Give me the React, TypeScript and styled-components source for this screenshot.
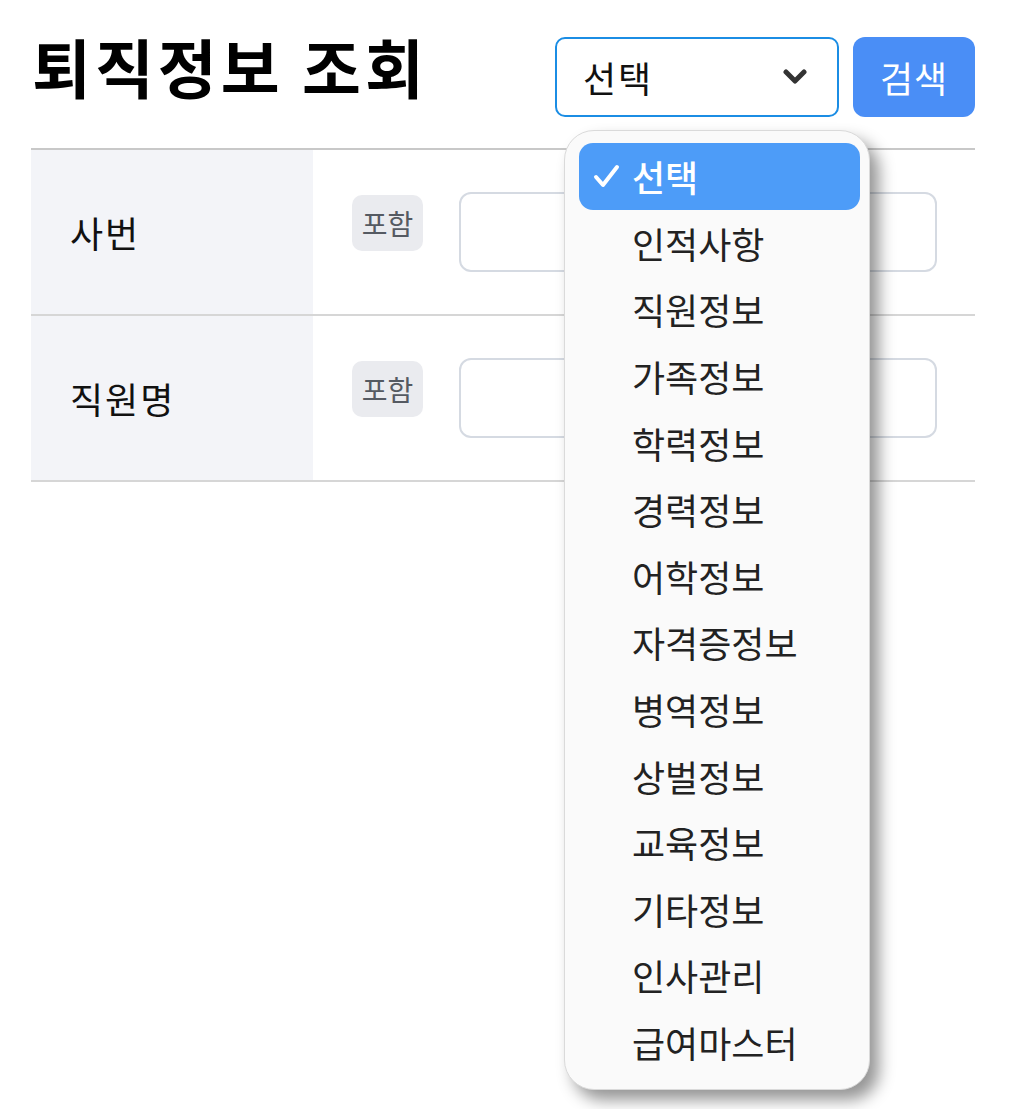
import React from "react";
import styled, { createGlobalStyle } from "styled-components";

const Global = createGlobalStyle`
  html, body { margin: 0; padding: 0; background: #ffffff; }
  body { font-family: "Noto Sans CJK KR", "Noto Sans", sans-serif; color: #111; }
  * { box-sizing: border-box; }
`;

const Page = styled.div`
  width: 1026px;
  height: 1109px;
  padding: 37px 51px 0 31px;
  overflow: hidden;
`;

const Header = styled.div`
  display: flex;
  justify-content: space-between;
  align-items: flex-start;
  height: 80px;
`;

const Title = styled.h1`
  margin: -4px 0 0 1px;
  font-size: 64px;
  line-height: 64px;
  font-weight: 700;
  letter-spacing: 4px;
  color: #000;
`;

const Controls = styled.div`
  display: flex;
  gap: 14px;
  align-items: stretch;
`;

const SelectWrap = styled.div`
  position: relative;
`;

const SelectBox = styled.div`
  width: 284px;
  height: 80px;
  border: 2px solid #1b8de4;
  border-radius: 10px;
  display: flex;
  align-items: center;
  justify-content: space-between;
  padding: 0 30px 0 26px;
  font-size: 36px;
  letter-spacing: 2px;
  color: #111;
  background: #fff;
`;

const SearchButton = styled.button`
  width: 122px;
  height: 80px;
  border: none;
  border-radius: 12px;
  background: #4a8ef6;
  color: #fff;
  font-family: inherit;
  font-size: 36px;
  letter-spacing: 1px;
  padding: 0;
`;

const Menu = styled.ul`
  position: absolute;
  left: 9px;
  top: 93px;
  width: 306px;
  margin: 0;
  padding: 12px 9px 14px 14px;
  list-style: none;
  background: #fafafa;
  border: 1px solid #dadada;
  border-radius: 30px;
  box-shadow: 9px 10px 16px rgba(0, 0, 0, 0.42);
  z-index: 10;
`;

const MenuItem = styled.li<{ $active?: boolean }>`
  height: 66.6px;
  display: flex;
  align-items: center;
  gap: 12px;
  padding-left: 14px;
  border-radius: 14px;
  font-size: 36px;
  font-weight: ${(p) => (p.$active ? 500 : 400)};
  color: ${(p) => (p.$active ? "#fff" : "#222")};
  background: ${(p) => (p.$active ? "#4d9cf8" : "transparent")};
`;

const CheckSlot = styled.span`
  width: 27px;
  display: flex;
  align-items: center;
`;

const Table = styled.div`
  margin-top: 31px;
  border-top: 2px solid #c8c8c8;
`;

const Row = styled.div`
  display: flex;
  height: 166px;
  border-bottom: 2px solid #d6d6d6;
`;

const LabelCell = styled.div`
  width: 282px;
  background: #f3f4f8;
  display: flex;
  align-items: center;
  padding-left: 39px;
  font-size: 36px;
  letter-spacing: 2px;
  color: #111;
`;

const ValueCell = styled.div`
  flex: 1;
  display: flex;
  align-items: flex-start;
  padding: 42px 38px 0 39px;
  gap: 36px;
`;

const Badge = styled.span`
  margin-top: 3px;
  width: 71px;
  height: 56px;
  border-radius: 10px;
  background: #eaebef;
  color: #555a62;
  font-size: 28px;
  display: flex;
  align-items: center;
  justify-content: center;
`;

const Input = styled.div`
  flex: 1;
  height: 80px;
  border: 2px solid #d5dae2;
  border-radius: 12px;
  background: #fff;
`;

const Chevron = () => (
  <svg width="24" height="16" viewBox="0 0 24 16">
    <path d="M3 3 L12 12 L21 3" fill="none" stroke="#333" strokeWidth="5" strokeLinecap="round" strokeLinejoin="round" />
  </svg>
);

const Check = () => (
  <svg width="27" height="26" viewBox="0 0 27 26">
    <path d="M3 14 L10 22 L24 4" fill="none" stroke="#fff" strokeWidth="4" strokeLinecap="round" strokeLinejoin="round" />
  </svg>
);

const options = [
  "선택",
  "인적사항",
  "직원정보",
  "가족정보",
  "학력정보",
  "경력정보",
  "어학정보",
  "자격증정보",
  "병역정보",
  "상벌정보",
  "교육정보",
  "기타정보",
  "인사관리",
  "급여마스터",
];

const rows = ["사번", "직원명"];

export default function App() {
  return (
    <>
      <Global />
      <Page>
        <Header>
          <Title>퇴직정보 조회</Title>
          <Controls>
            <SelectWrap>
              <SelectBox>
                <span>선택</span>
                <Chevron />
              </SelectBox>
              <Menu>
                {options.map((o, i) => (
                  <MenuItem key={o} $active={i === 0}>
                    <CheckSlot>{i === 0 ? <Check /> : null}</CheckSlot>
                    {o}
                  </MenuItem>
                ))}
              </Menu>
            </SelectWrap>
            <SearchButton>검색</SearchButton>
          </Controls>
        </Header>
        <Table>
          {rows.map((r) => (
            <Row key={r}>
              <LabelCell>{r}</LabelCell>
              <ValueCell>
                <Badge>포함</Badge>
                <Input />
              </ValueCell>
            </Row>
          ))}
        </Table>
      </Page>
    </>
  );
}
